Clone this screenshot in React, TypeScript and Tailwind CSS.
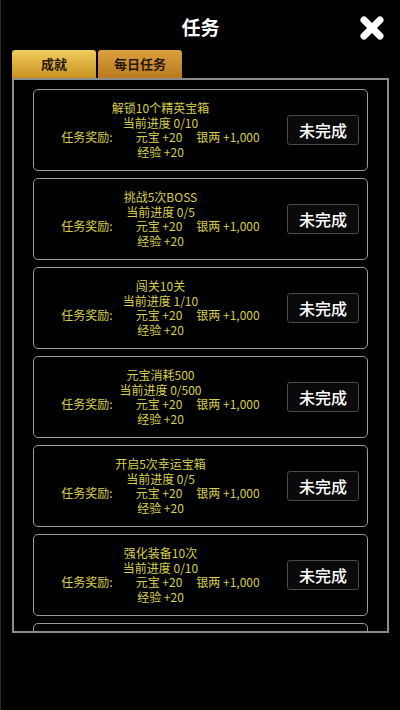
import React from "react";

type Task = {
  name: string;
  progress: string;
};

const tasks: Task[] = [
  { name: "解锁10个精英宝箱", progress: "0/10" },
  { name: "挑战5次BOSS", progress: "0/5" },
  { name: "闯关10关", progress: "1/10" },
  { name: "元宝消耗500", progress: "0/500" },
  { name: "开启5次幸运宝箱", progress: "0/5" },
  { name: "强化装备10次", progress: "0/10" },
  { name: "击败100个敌人", progress: "0/100" },
];

const font = { fontFamily: '"Noto Sans CJK SC", "Noto Sans", sans-serif' };

export default function App() {
  return (
    <div
      className="relative flex h-[710px] w-[400px] flex-col overflow-hidden border-l border-[#2a2a2a] bg-black"
      style={font}
    >
      {/* Header */}
      <div className="flex h-[50px] items-center justify-center">
        <span className="mt-[4px] text-[19px] font-bold text-white">任务</span>
      </div>
      <button className="absolute right-[15px] top-[15px] h-[26px] w-[26px]">
        <svg viewBox="0 0 26 26" className="h-full w-full">
          <path
            d="M5 5 L21 21 M21 5 L5 21"
            stroke="white"
            strokeWidth="7"
            strokeLinecap="round"
          />
        </svg>
      </button>

      {/* Tabs */}
      <div className="ml-[11px] flex h-[28px] gap-[2px]">
        <div className="flex w-[84px] items-center justify-center rounded-t-[3px] bg-gradient-to-b from-[#f0cc5c] to-[#c8921e] text-[13px] font-bold text-[#2a1a05]">
          成就
        </div>
        <div className="flex w-[84px] items-center justify-center rounded-t-[3px] bg-gradient-to-b from-[#dca040] to-[#b87a1c] text-[13px] font-bold text-[#2a1a05]">
          每日任务
        </div>
      </div>

      {/* Panel */}
      <div className="ml-[11px] mr-[11px] h-[555px] overflow-hidden border-2 border-b-2 border-[#8c8c8c] px-[19px] pt-[9px]">
        <div className="flex flex-col gap-[7px]">
          {tasks.map((t) => (
            <div
              key={t.name}
              className="flex h-[82px] shrink-0 items-center rounded-[5px] border border-[#9a9a9a] pr-[8px]"
            >
              <div className="flex flex-1 flex-col items-center text-[12px] leading-[14.5px] text-[#d6cf48]">
                <span>{t.name}</span>
                <span>当前进度 {t.progress}</span>
                <div className="flex">
                  <span>任务奖励:</span>
                  <span className="ml-[23px]">元宝 +20</span>
                  <span className="ml-[14px]">银两 +1,000</span>
                </div>
                <span>经验 +20</span>
              </div>
              <div className="flex h-[30px] w-[72px] items-center justify-center rounded-[3px] border border-[#4a4a4a] bg-[#0a0a0a] text-[16px] font-medium text-white">
                未完成
              </div>
            </div>
          ))}
        </div>
      </div>
    </div>
  );
}
